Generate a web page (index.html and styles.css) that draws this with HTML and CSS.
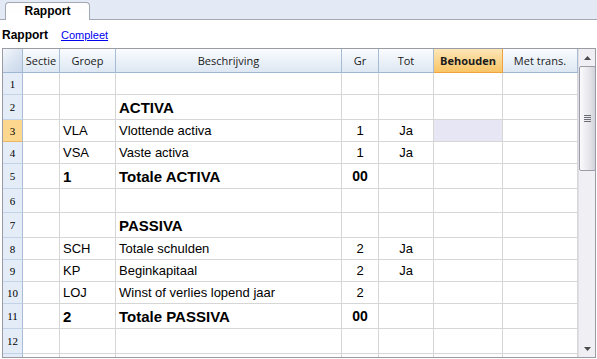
FILE: index.html
```html
<!DOCTYPE html>
<html lang="nl">
<head>
    <meta charset="UTF-8">
    <title>Rapport</title>
    <link rel="stylesheet" href="styles.css">
</head>
<body>
    <div class="tabbar">
        <div class="tab">Rapport</div>
    </div>

    <div class="toolbar">
        <span class="view-name">Rapport</span>
        <a class="view-link" href="#">Compleet</a>
    </div>

    <div class="frame">
        <div class="sheet">
            <div class="row head">
                <div class="cell corner"></div>
                <div class="cell">Sectie</div>
                <div class="cell">Groep</div>
                <div class="cell">Beschrijving</div>
                <div class="cell">Gr</div>
                <div class="cell">Tot</div>
                <div class="cell active">Behouden</div>
                <div class="cell">Met trans.</div>
            </div>

            <div class="row">
                <div class="cell num">1</div>
                <div class="cell"></div><div class="cell"></div><div class="cell"></div>
                <div class="cell"></div><div class="cell"></div><div class="cell"></div><div class="cell"></div>
            </div>
            <div class="row big">
                <div class="cell num">2</div>
                <div class="cell"></div><div class="cell"></div>
                <div class="cell text bold">ACTIVA</div>
                <div class="cell"></div><div class="cell"></div><div class="cell"></div><div class="cell"></div>
            </div>
            <div class="row">
                <div class="cell num current">3</div>
                <div class="cell"></div>
                <div class="cell text">VLA</div>
                <div class="cell text">Vlottende activa</div>
                <div class="cell mid">1</div>
                <div class="cell mid">Ja</div>
                <div class="cell selected"></div>
                <div class="cell"></div>
            </div>
            <div class="row">
                <div class="cell num">4</div>
                <div class="cell"></div>
                <div class="cell text">VSA</div>
                <div class="cell text">Vaste activa</div>
                <div class="cell mid">1</div>
                <div class="cell mid">Ja</div>
                <div class="cell"></div><div class="cell"></div>
            </div>
            <div class="row big">
                <div class="cell num">5</div>
                <div class="cell"></div>
                <div class="cell text bold">1</div>
                <div class="cell text bold">Totale ACTIVA</div>
                <div class="cell mid total">00</div>
                <div class="cell"></div><div class="cell"></div><div class="cell"></div>
            </div>
            <div class="row gap">
                <div class="cell num">6</div>
                <div class="cell"></div><div class="cell"></div><div class="cell"></div>
                <div class="cell"></div><div class="cell"></div><div class="cell"></div><div class="cell"></div>
            </div>
            <div class="row big">
                <div class="cell num">7</div>
                <div class="cell"></div><div class="cell"></div>
                <div class="cell text bold">PASSIVA</div>
                <div class="cell"></div><div class="cell"></div><div class="cell"></div><div class="cell"></div>
            </div>
            <div class="row">
                <div class="cell num">8</div>
                <div class="cell"></div>
                <div class="cell text">SCH</div>
                <div class="cell text">Totale schulden</div>
                <div class="cell mid">2</div>
                <div class="cell mid">Ja</div>
                <div class="cell"></div><div class="cell"></div>
            </div>
            <div class="row">
                <div class="cell num">9</div>
                <div class="cell"></div>
                <div class="cell text">KP</div>
                <div class="cell text">Beginkapitaal</div>
                <div class="cell mid">2</div>
                <div class="cell mid">Ja</div>
                <div class="cell"></div><div class="cell"></div>
            </div>
            <div class="row">
                <div class="cell num">10</div>
                <div class="cell"></div>
                <div class="cell text">LOJ</div>
                <div class="cell text">Winst of verlies lopend jaar</div>
                <div class="cell mid">2</div>
                <div class="cell"></div><div class="cell"></div><div class="cell"></div>
            </div>
            <div class="row big">
                <div class="cell num">11</div>
                <div class="cell"></div>
                <div class="cell text bold">2</div>
                <div class="cell text bold">Totale PASSIVA</div>
                <div class="cell mid total">00</div>
                <div class="cell"></div><div class="cell"></div><div class="cell"></div>
            </div>
            <div class="row big">
                <div class="cell num">12</div>
                <div class="cell"></div><div class="cell"></div><div class="cell"></div>
                <div class="cell"></div><div class="cell"></div><div class="cell"></div><div class="cell"></div>
            </div>
            <div class="row">
                <div class="cell num"></div>
                <div class="cell"></div><div class="cell"></div><div class="cell"></div>
                <div class="cell"></div><div class="cell"></div><div class="cell"></div><div class="cell"></div>
            </div>
        </div>

        <div class="scrollbar">
            <div class="sb-btn">
                <svg width="7" height="4" viewBox="0 0 7 4"><path d="M0 4 L3.5 0 L7 4 Z" fill="#4a4a4a"/></svg>
            </div>
            <div class="sb-thumb">
                <span class="grip"></span>
            </div>
            <div class="sb-track"></div>
            <div class="sb-btn">
                <svg width="7" height="4" viewBox="0 0 7 4"><path d="M0 0 L7 0 L3.5 4 Z" fill="#4a4a4a"/></svg>
            </div>
        </div>
    </div>
</body>
</html>
```

FILE: styles.css
```css
body {
    margin: 0;
    font-family: "Liberation Sans", Arial, sans-serif;
    font-size: 13px;
    color: #000;
    background: #fff;
}
.tabbar {
    height: 20px;
    padding-top: 2px;
    padding-left: 5px;
    background: #e3eaf5;
    border-bottom: 1px solid #a3a9b3;
    box-sizing: border-box;
}
.tab {
    width: 85px;
    height: 18px;
    box-sizing: border-box;
    background: linear-gradient(#fdfdfd, #ffffff);
    border: 1px solid #a3a9b3;
    border-bottom: none;
    border-radius: 4px 4px 0 0;
    font-weight: bold;
    font-size: 12px;
    text-align: center;
    line-height: 17px;
}
.toolbar {
    height: 28px;
    display: flex;
    align-items: center;
    gap: 13px;
    padding-left: 2px;
    padding-top: 1px;
    box-sizing: border-box;
}
.view-name {
    font-weight: bold;
    font-size: 12px;
}
.view-link {
    font-size: 11px;
    color: #0000f0;
    text-decoration: underline;
}
.frame {
    margin-left: 2px;
    width: 594px;
    height: 310px;
    box-sizing: border-box;
    border: 1px solid #9b9ba3;
    display: flex;
    overflow: hidden;
}
.sheet {
    width: 575px;
    flex: none;
}
.row {
    display: grid;
    grid-template-columns: 20px 37px 56px 226px 37px 55px 69px 75px;
    height: 22px;
}
.row.big {
    height: 25px;
}
.row.gap {
    height: 24px;
}
.cell {
    box-sizing: border-box;
    border-right: 1px solid #d6d6d6;
    border-bottom: 1px solid #d6d6d6;
    display: flex;
    align-items: center;
    white-space: nowrap;
    overflow: hidden;
}
.text {
    padding-left: 3px;
}
.mid {
    justify-content: center;
}
.bold {
    font-weight: bold;
    font-size: 15px;
}
.total {
    font-weight: bold;
    font-size: 14px;
}
.selected {
    background: #e6e6f5;
}
.num {
    justify-content: center;
    font-family: "Liberation Serif", "Times New Roman", serif;
    font-size: 11px;
    background: #e4ecf7;
    border-right-color: #a9bdd6;
    border-bottom-color: #c3d2e6;
}
.num.current {
    background: #fcd78d;
    border-bottom-color: #e8b766;
}
.head {
    height: 24px;
}
.head .cell {
    justify-content: center;
    font-family: "Open Sans", "Segoe UI", sans-serif;
    font-size: 11px;
    color: #1a1a1a;
    background: linear-gradient(#fafcfe, #dde7f3);
    border-right-color: #a6bcd5;
    border-bottom-color: #9fb6d0;
}
.head .corner {
    background: linear-gradient(135deg, #f4f7fb 0%, #dbe5f2 50%, #c9d7ea 100%);
}
.head .active {
    font-weight: bold;
    background: linear-gradient(#fde7b8, #f8c466);
    border-right-color: #f0a23c;
    border-bottom-color: #f0a23c;
}
.scrollbar {
    width: 17px;
    flex: none;
    display: flex;
    flex-direction: column;
    background: #f0eff4;
    border-left: 1px solid #e0dfe6;
}
.sb-btn {
    height: 17px;
    display: flex;
    align-items: center;
    justify-content: center;
    flex: none;
}
.sb-thumb {
    height: 105px;
    flex: none;
    box-sizing: border-box;
    border: 1px solid #9c9ca8;
    border-radius: 2px;
    background: linear-gradient(90deg, #fbfbfd, #e6e6ec 60%, #d2d2da);
    display: flex;
    align-items: center;
    justify-content: center;
}
.grip {
    width: 7px;
    height: 7px;
    background: repeating-linear-gradient(#6e6e78 0 1px, transparent 1px 2px);
}
.sb-track {
    flex: 1;
}
```
